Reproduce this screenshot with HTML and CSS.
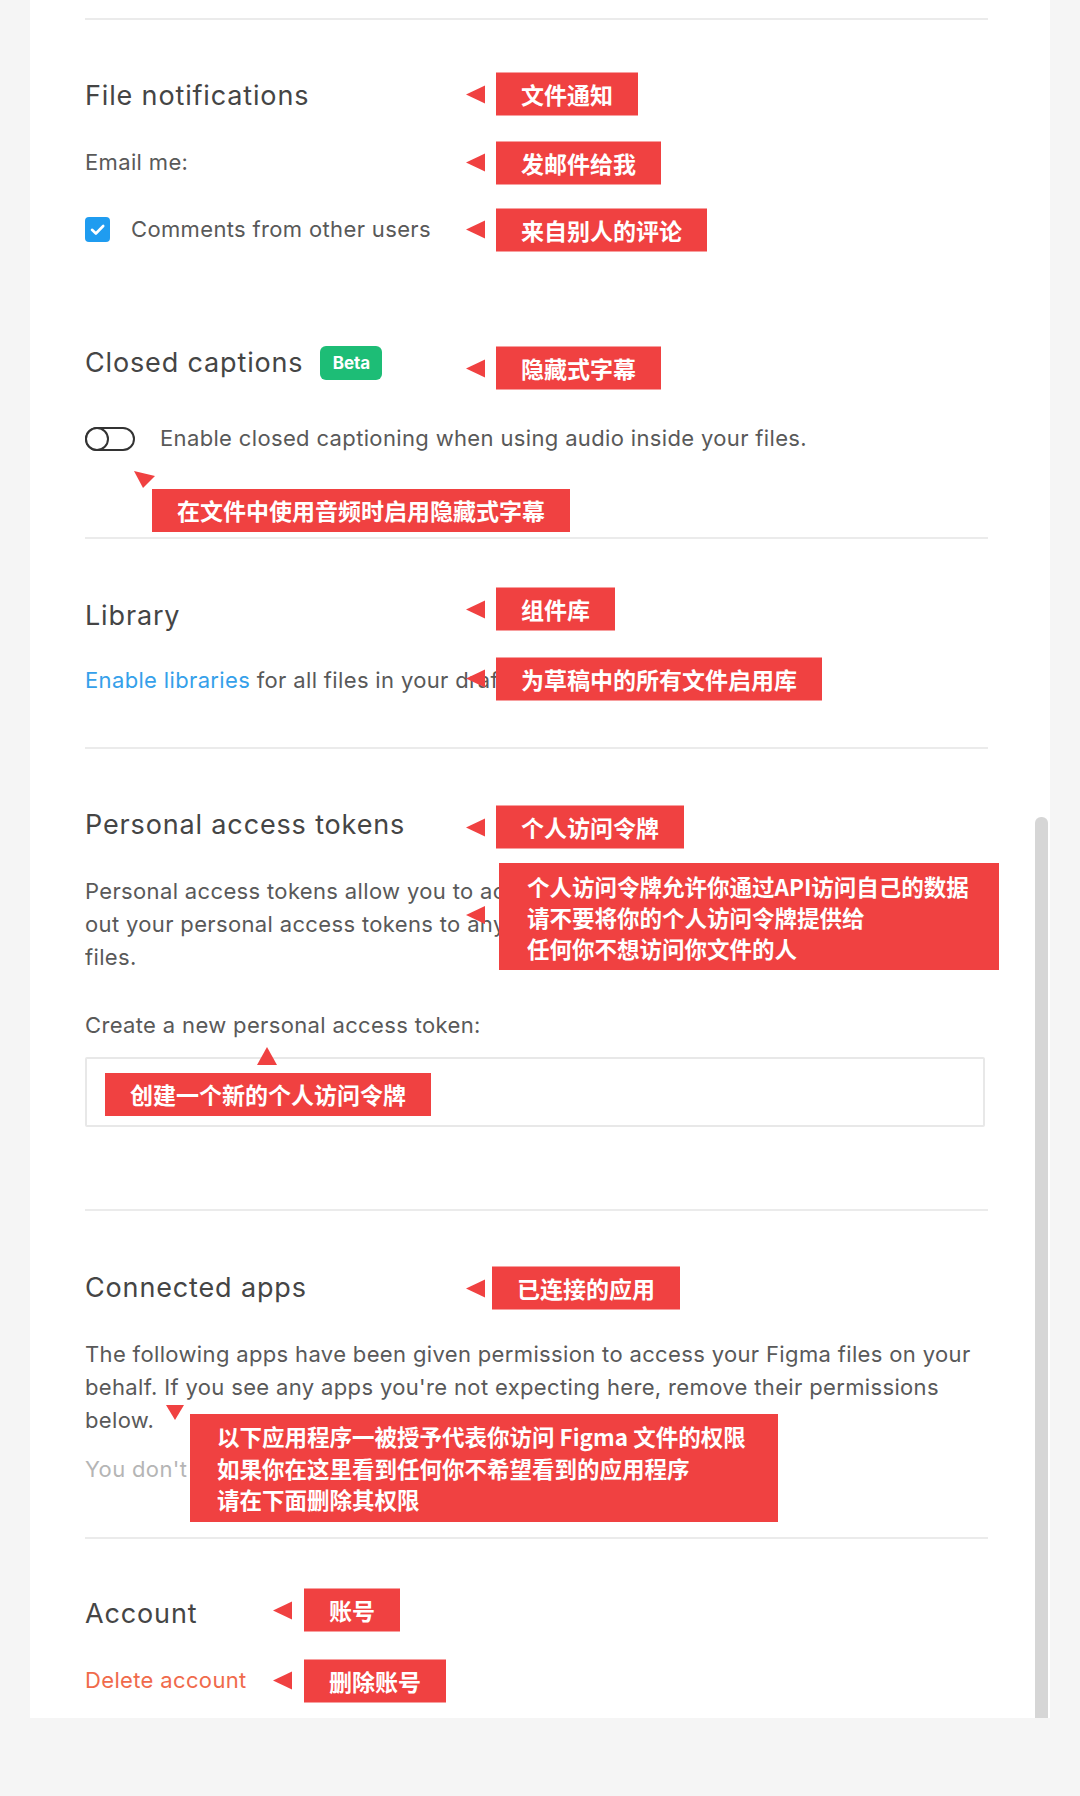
FILE: index.html
```html
<!DOCTYPE html>
<html lang="en">
<head>
<meta charset="utf-8">
<title>Settings</title>
<link rel="stylesheet" href="styles.css">
</head>
<body>
<div class="page">
  <div class="card">
    <div class="divider"></div>

    <div class="row head first">
      <h2 class="h">File notifications</h2>
      <div class="note up2"><span class="tri"></span><span class="tag">文件通知</span></div>
    </div>
    <div class="row t gap33">
      <span>Email me:</span>
      <div class="note"><span class="tri"></span><span class="tag">发邮件给我</span></div>
    </div>
    <div class="row t gap34 check-row">
      <svg class="checkbox" width="25" height="25" viewBox="0 0 25 25"><rect x="0" y="0" width="25" height="25" rx="4" fill="#1f9cf0"/><path d="M7 12.8 L10.9 16.5 L18.2 9" fill="none" stroke="#fff" stroke-width="2.6" stroke-linecap="round" stroke-linejoin="round"/></svg>
      <span>Comments from other users</span>
      <div class="note"><span class="tri"></span><span class="tag">来自别人的评论</span></div>
    </div>

    <div class="row head sec-cc">
      <h2 class="h">Closed captions</h2>
      <span class="beta">Beta</span>
      <div class="note down5"><span class="tri"></span><span class="tag">隐藏式字幕</span></div>
    </div>
    <div class="row t toggle-row">
      <svg class="toggle" width="50" height="24" viewBox="0 0 50 24"><rect x="1" y="1" width="48" height="22" rx="11" fill="none" stroke="#333" stroke-width="2"/><circle cx="12" cy="12" r="11" fill="#fff" stroke="#333" stroke-width="2"/></svg>
      <span>Enable closed captioning when using audio inside your files.</span>
      <svg class="tilt" width="24" height="20" viewBox="0 0 24 20"><polygon points="0,0 21,5 9,17" fill="#f04141"/></svg>
      <span class="tag tag-cc">在文件中使用音频时启用隐藏式字幕</span>
    </div>
    <div class="divider d-cc"></div>

    <div class="row head sec-next">
      <h2 class="h">Library</h2>
      <div class="note up7"><span class="tri"></span><span class="tag">组件库</span></div>
    </div>
    <div class="row t gap31">
      <span><a class="link">Enable libraries</a> for all files in your drafts.</span>
      <div class="note up2"><span class="tri"></span><span class="tag">为草稿中的所有文件启用库</span></div>
    </div>
    <div class="divider d-lib"></div>

    <div class="row head sec-pat">
      <h2 class="h">Personal access tokens</h2>
      <div class="note down2"><span class="tri"></span><span class="tag">个人访问令牌</span></div>
    </div>
    <div class="block gap33">
      <p class="t para">Personal access tokens allow you to access your own data via the API. Do not give<br>out your personal access tokens to anybody who you don't want to access your<br>files.</p>
      <span class="tri tri-pat"></span>
      <div class="bigtag big-pat">个人访问令牌允许你通过API访问自己的数据<br>请不要将你的个人访问令牌提供给<br>任何你不想访问你文件的人</div>
    </div>
    <div class="t create">Create a new personal access token:</div>
    <div class="input-box">
      <span class="tri-up"></span>
      <span class="tag tag-create">创建一个新的个人访问令牌</span>
    </div>
    <div class="divider d-pat"></div>

    <div class="row head sec-next">
      <h2 class="h">Connected apps</h2>
      <div class="note apps"><span class="tri"></span><span class="tag">已连接的应用</span></div>
    </div>
    <div class="block gap33">
      <p class="t para">The following apps have been given permission to access your Figma files on your<br>behalf. If you see any apps you're not expecting here, remove their permissions<br>below.</p>
      <span class="tri-down"></span>
      <div class="bigtag big-apps">以下应用程序一被授予代表你访问 Figma 文件的权限<br>如果你在这里看到任何你不希望看到的应用程序<br>请在下面删除其权限</div>
    </div>
    <div class="t muted">You don't have any connected apps.</div>
    <div class="divider d-apps"></div>

    <div class="row head sec-acc">
      <h2 class="h">Account</h2>
      <div class="note acc up4"><span class="tri"></span><span class="tag">账号</span></div>
    </div>
    <div class="row t gap33">
      <a class="danger">Delete account</a>
      <div class="note acc"><span class="tri"></span><span class="tag">删除账号</span></div>
    </div>
  </div>
  <div class="scrollbar"></div>
</div>
</body>
</html>
```

FILE: styles.css
```css
* { box-sizing: border-box; }

body {
  margin: 0;
  background: #f5f5f5;
  font-family: "Inter", "Noto Sans CJK SC", sans-serif;
}

.page {
  position: relative;
  width: 1080px;
  height: 1796px;
  overflow: hidden;
}

.card {
  margin-left: 30px;
  width: 1020px;
  padding: 18px 62px 21px 55px;
  background: #fff;
}

.divider {
  height: 2px;
  background: #ebebeb;
}

.row {
  position: relative;
  display: flex;
  align-items: center;
}

.h {
  margin: 0;
  font-size: 27px;
  line-height: 34px;
  letter-spacing: 0.85px;
  font-weight: 400;
  color: #454545;
}

.t {
  font-size: 22px;
  line-height: 33px;
  letter-spacing: 0.35px;
  color: #595959;
}

.head.first { margin-top: 59px; }
.gap33 { margin-top: 33px; }
.gap34 { margin-top: 34px; }
.gap31 { margin-top: 31px; }
.sec-cc { margin-top: 100px; }
.sec-next { margin-top: 60px; }
.sec-pat { margin-top: 59px; }
.sec-acc { margin-top: 58px; }

.checkbox { margin-right: 21px; flex: none; }

.beta {
  margin-left: 17px;
  width: 62px;
  height: 34px;
  border-radius: 6px;
  background: #1dbd76;
  color: #fff;
  font-size: 17px;
  font-weight: 700;
  line-height: 34px;
  letter-spacing: 0;
  text-align: center;
}

.toggle-row { margin-top: 42px; }
.toggle { margin-right: 25px; flex: none; }

.tilt {
  position: absolute;
  left: 49px;
  top: 49px;
}

.d-cc { margin-top: 82px; }
.d-lib { margin-top: 50px; }
.d-pat { margin-top: 82px; }
.d-apps { margin-top: 51px; }

.link { color: #35a0ea; }
.danger { color: #f06a4b; }
.muted { color: #b5b5b5; margin-top: 16px; }

/* annotations */
.note {
  position: absolute;
  left: 381px;
  top: 50%;
  transform: translateY(-50%);
  display: flex;
  align-items: center;
  gap: 11px;
  letter-spacing: 0;
}
.note.down5 { margin-top: 5px; }
.note.down2 { margin-top: 2px; }
.note.up7 { margin-top: -7px; }
.note.up4 { margin-top: -4px; }
.note.up2 { margin-top: -2px; }
.note.apps { gap: 7px; }
.note.acc { left: 188px; gap: 12px; }

.tri {
  display: block;
  width: 0;
  height: 0;
  border-top: 9px solid transparent;
  border-bottom: 9px solid transparent;
  border-right: 19px solid #f04141;
}

.tag {
  display: block;
  background: #f04141;
  color: #fff;
  font-family: "Noto Sans CJK SC", sans-serif;
  font-weight: 700;
  font-size: 23px;
  line-height: 43px;
  letter-spacing: 0;
  padding: 0 25px;
  white-space: nowrap;
}

.tag-cc {
  position: absolute;
  left: 67px;
  top: 67px;
}

.block { position: relative; }

.para {
  margin: 0;
  white-space: nowrap;
  overflow: hidden;
}

.bigtag {
  position: absolute;
  background: #f04141;
  color: #fff;
  font-family: "Noto Sans CJK SC", sans-serif;
  font-weight: 700;
  font-size: 22.5px;
  line-height: 31px;
  letter-spacing: 0;
  white-space: nowrap;
}

.big-pat {
  left: 414px;
  top: -12px;
  width: 500px;
  padding: 8px 28px 6px;
}

.tri-pat {
  position: absolute;
  left: 381px;
  top: 31px;
}

.big-apps {
  left: 105px;
  top: 76px;
  width: 588px;
  padding: 7px 27px 6px;
  line-height: 31.5px;
}

.tri-down {
  position: absolute;
  left: 81px;
  top: 67px;
  width: 0;
  height: 0;
  border-left: 9px solid transparent;
  border-right: 9px solid transparent;
  border-top: 15px solid #f04141;
}

.create { margin-top: 35px; }

.input-box {
  position: relative;
  margin-top: 15px;
  width: 900px;
  height: 70px;
  border: 2px solid #e8e8e8;
  border-radius: 2px;
}

.tri-up {
  position: absolute;
  left: 170px;
  top: -12px;
  width: 0;
  height: 0;
  border-left: 10px solid transparent;
  border-right: 10px solid transparent;
  border-bottom: 18px solid #f04141;
}

.tag-create {
  position: absolute;
  left: 18px;
  top: 14px;
}

.scrollbar {
  position: absolute;
  left: 1035px;
  top: 817px;
  width: 13px;
  height: 901px;
  background: #d6d6d6;
  border-radius: 6px 6px 0 0;
}
```
